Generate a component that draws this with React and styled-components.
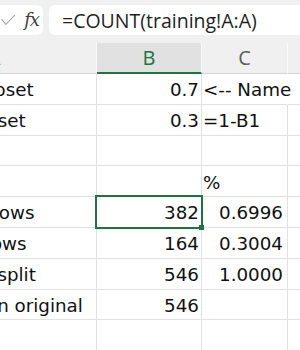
import React from "react"
import styled, { createGlobalStyle } from "styled-components"

const GlobalStyle = createGlobalStyle`
  html, body {
    margin: 0;
    padding: 0;
    background: #fff;
  }
`

const Window = styled.div`
  width: 300px;
  height: 350px;
  overflow: hidden;
  background: #fff;
`

const FormulaBar = styled.div`
  display: flex;
  align-items: stretch;
  gap: 6px;
  height: 43px;
  box-sizing: border-box;
  padding: 5px 0 8px;
  background: #f0f0f0;
`

const ControlBox = styled.div`
  display: flex;
  align-items: center;
  justify-content: flex-end;
  gap: 9px;
  flex-shrink: 0;
  width: 65px;
  margin-left: -22px;
  padding-right: 4px;
  box-sizing: border-box;
  background: #fff;
  border-radius: 6px;
`

const Fx = styled.span`
  font-family: "DejaVu Serif", serif;
  font-style: italic;
  font-size: 18px;
  line-height: 1;
  color: #404040;
  letter-spacing: -1px;
`

const FormulaInput = styled.div`
  flex: 1;
  margin-right: -12px;
  padding: 1px 0 0 13px;
  background: #fff;
  border-radius: 6px;
  font-family: "Open Sans", sans-serif;
  font-size: 19.5px;
  line-height: 29px;
  color: #1f1f1f;
  white-space: nowrap;
`

// sheet is scrolled sideways, so column A starts left of the window
const Sheet = styled.div`
  display: grid;
  grid-template-columns: 205px 105px 86px 120px;
  grid-template-rows: 31px;
  grid-auto-rows: 30.8px;
  margin-left: -108px;
`

const ColHeader = styled.div`
  box-sizing: border-box;
  border-right: 1px solid #fafafa;
  border-bottom: ${p => (p.$active ? "2px solid #217346" : "1px solid #d4d4d4")};
  background: ${p => (p.$active ? "#e1e1e1" : "#f0f0f0")};
  color: ${p => (p.$active ? "#217346" : "#5c5c5c")};
  font-family: "Open Sans", sans-serif;
  font-size: 20px;
  line-height: 29px;
  text-align: center;
`

const Cell = styled.div`
  position: relative;
  box-sizing: border-box;
  display: flex;
  align-items: flex-end;
  justify-content: ${p => (p.$align === "right" ? "flex-end" : "flex-start")};
  padding: 0 ${p => p.$padRight || 0}px 3.5px ${p => p.$padLeft || 0}px;
  border-right: 1px solid ${p => (p.$spill ? "transparent" : "#e1e1e1")};
  border-bottom: 1px solid #e1e1e1;
  font-family: "DejaVu Sans", sans-serif;
  font-size: 18.3px;
  color: #111;
  white-space: nowrap;

  ${p =>
    p.$selected &&
    `
    &::after {
      content: "";
      position: absolute;
      top: -2px;
      left: -2px;
      right: -2px;
      bottom: -2px;
      border: 2px solid #217346;
      z-index: 1;
    }
  `}
`

const FillHandle = styled.span`
  position: absolute;
  right: -3px;
  bottom: -3px;
  width: 5px;
  height: 5px;
  background: #217346;
  z-index: 2;
`

const rows = [
  ["Training subset", "0.7", "<-- Name"],
  ["Testing subset", "0.3", "=1-B1"],
  ["", "", ""],
  ["", "", "%"],
  ["Train data rows", "382", "0.6996"],
  ["Test data rows", "164", "0.3004"],
  ["Rows after split", "546", "1.0000"],
  ["Total rows in original", "546", ""],
  ["", "", ""],
]

const isNumber = v => /^-?\d+(\.\d+)?$/.test(v)

function Check() {
  return (
    <svg width="15" height="12" viewBox="0 0 15 12">
      <path d="M0.5 5 L5 10.5 L14.5 0.8" fill="none" stroke="#a9a9a9" strokeWidth="1.2" />
    </svg>
  )
}

function Cancel() {
  return (
    <svg width="14" height="14" viewBox="0 0 14 14">
      <path d="M2 2 L12 12 M12 2 L2 12" stroke="#a9a9a9" strokeWidth="1.2" />
    </svg>
  )
}

export default function App() {
  return (
    <Window>
      <GlobalStyle />
      <FormulaBar>
        <ControlBox>
          <Cancel />
          <Check />
          <Fx>fx</Fx>
        </ControlBox>
        <FormulaInput>=COUNT(training!A:A)</FormulaInput>
      </FormulaBar>
      <Sheet>
        <ColHeader>A</ColHeader>
        <ColHeader $active>B</ColHeader>
        <ColHeader>C</ColHeader>
        <ColHeader>D</ColHeader>
        {rows.map(([a, b, c], i) => (
          <React.Fragment key={i}>
            <Cell $padLeft={3}>{a}</Cell>
            <Cell $align="right" $padRight={2} $selected={i === 4}>
              {b}
              {i === 4 && <FillHandle />}
            </Cell>
            <Cell
              $align={isNumber(c) ? "right" : "left"}
              $padRight={4}
              $padLeft={1}
              $spill={c.length > 6 && !isNumber(c)}
            >
              {c}
            </Cell>
            <Cell />
          </React.Fragment>
        ))}
      </Sheet>
    </Window>
  )
}
